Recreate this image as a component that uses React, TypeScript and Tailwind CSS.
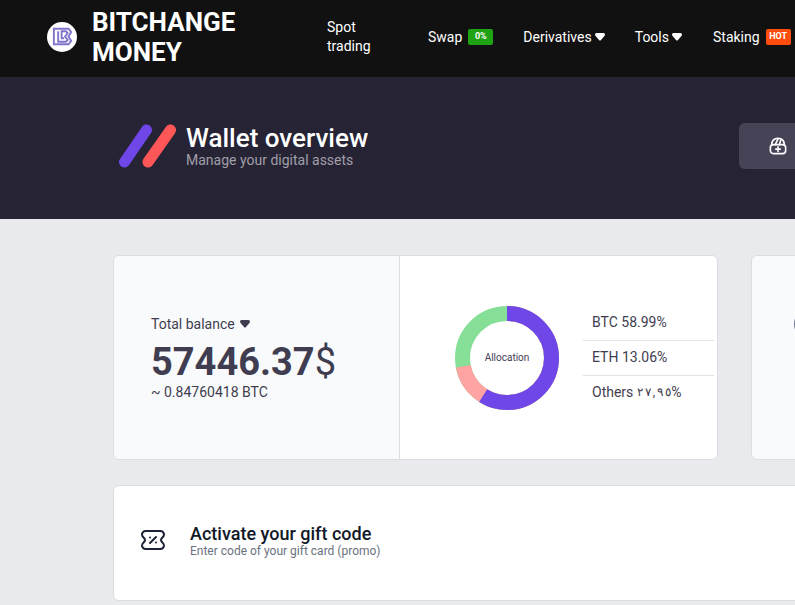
import React from "react";

function Caret({ className }: { className: string }) {
  return (
    <svg viewBox="0 0 10 8" className={className} fill="currentColor">
      <path d="M1.500 0h7Q10 0 10 1.500q0 1-1 2L6 7Q5 8 4 7L1 3.500Q0 2.500 0 1.500 0 0 1.500 0Z" />
    </svg>
  );
}

function Logo() {
  return (
    <div className="flex h-[30px] w-[30px] shrink-0 items-center justify-center rounded-full bg-white">
      <svg viewBox="0 0 24 22" className="h-[19px] w-[21px]" fill="none" stroke="#8075cc" strokeWidth="2.2">
        <path d="M2 2h17l3 4-3 5 3 5-3 4H2Z" />
        <path d="M7 5v12h9l2-2-3-4 3-4-2-2H11v8h3" />
      </svg>
    </div>
  );
}

function Donut() {
  return (
    <div className="relative h-[104px] w-[104px] shrink-0">
      <svg viewBox="0 0 104 104" className="h-full w-full -rotate-90">
        <circle cx="52" cy="52" r="44.5" fill="none" stroke="#86df96" strokeWidth="15" />
        <circle cx="52" cy="52" r="44.5" fill="none" stroke="#ffa3a3" strokeWidth="15" pathLength="100" strokeDasharray="72 28" />
        <circle cx="52" cy="52" r="44.5" fill="none" stroke="#6f46e8" strokeWidth="15" pathLength="100" strokeDasharray="59 41" />
      </svg>
      <div className="absolute inset-0 flex items-center justify-center pt-[2px] text-[10px] text-[#3f3d56]">Allocation</div>
    </div>
  );
}

const navText = "text-sm text-white";

export default function App() {
  return (
    <div className="h-[605px] w-[795px] overflow-hidden bg-[#e9eaee] font-['Roboto',sans-serif]">
      <header className="flex h-[77px] items-center bg-[#111111] pb-[4px] pl-[47px]">
        <Logo />
        <div className="ml-[15px] w-[190px] text-[26px] leading-[30px] font-bold text-white">BITCHANGE MONEY</div>
        <div className={`ml-[45px] w-[60px] leading-[19px] ${navText}`}>Spot trading</div>
        <div className={`ml-[41px] flex items-center ${navText}`}>
          Swap
          <span className="ml-[6px] flex h-[16px] w-[25px] items-center justify-center rounded-[2px] bg-[#1fa114] text-[9px] font-bold">0%</span>
        </div>
        <div className={`ml-[30px] flex items-center ${navText}`}>
          Derivatives
          <Caret className="ml-[3px] h-[8px] w-[10px]" />
        </div>
        <div className={`ml-[30px] flex items-center ${navText}`}>
          Tools
          <Caret className="ml-[3px] h-[8px] w-[10px]" />
        </div>
        <div className={`ml-[31px] flex items-center ${navText}`}>
          Staking
          <span className="ml-[6px] flex h-[16px] w-[25px] items-center justify-center rounded-[2px] bg-[#ff4d0d] text-[9px] font-bold">HOT</span>
        </div>
      </header>

      <section className="flex h-[142px] items-center bg-[#262335] pb-[4px] pl-[119px]">
        <svg viewBox="0 0 58 44" className="h-[44px] w-[58px] shrink-0">
          <line x1="5.500" y1="38" x2="27.500" y2="6" stroke="#6f46e8" strokeWidth="11" strokeLinecap="round" />
          <line x1="29" y1="38" x2="51.500" y2="6" stroke="#ff5757" strokeWidth="11" strokeLinecap="round" />
        </svg>
        <div className="ml-[9px] w-[553px] shrink-0 pb-[2px]">
          <h1 className="text-[26px] leading-[30px] font-medium text-white">Wallet overview</h1>
          <p className="text-sm leading-[15px] text-[#a09fa8]">Manage your digital assets</p>
        </div>
        <div className="flex h-[46px] w-[120px] shrink-0 items-center rounded-md bg-[#464356] pl-[30px]">
          <svg viewBox="0 0 20 20" className="h-[18px] w-[18px] text-white" fill="none" stroke="currentColor" strokeWidth="1.800" strokeLinecap="round" strokeLinejoin="round">
            <path d="M3 9C3 4 6 1.500 10 1.500S17 4 17 9" />
            <path d="M10 2 7 8.500M13 3.500l-1.500 5" />
            <rect x="1.500" y="8.500" width="17" height="10" rx="3.500" />
            <path d="M10 11v5M7.500 13.500h5" />
          </svg>
        </div>
      </section>

      <main className="flex flex-col gap-[25px] pt-[36px] pl-[113px]">
        <div className="flex gap-[33px]">
          <div className="flex h-[205px] w-[605px] shrink-0 overflow-hidden rounded-md border border-[#dcdde1] bg-white">
            <div className="flex w-[286px] shrink-0 flex-col justify-center border-r border-[#dcdde1] bg-[#f9fafc] pt-[1px] pl-[37px] text-[#3f3d4f]">
              <div className="flex items-center text-sm leading-[20px]">
                Total balance
                <Caret className="ml-[5px] h-[8px] w-[10px]" />
              </div>
              <div className="mt-[5px] text-[38px] leading-[46px] font-bold">
                57446.37<span className="font-normal">$</span>
              </div>
              <div className="mt-[-3px] text-sm leading-[20px]">~ 0.84760418 BTC</div>
            </div>
            <div className="flex flex-1 items-center pl-[55px] text-sm text-[#3f3d4f]">
              <Donut />
              <ul className="ml-[24px] w-[131px] pt-[1px]">
                <li className="flex h-[35px] items-center border-b border-[#e2e3e6] pb-[2px] pl-[9px]">BTC 58.99%</li>
                <li className="flex h-[35px] items-center border-b border-[#e2e3e6] pb-[2px] pl-[9px]">ETH 13.06%</li>
                <li className="flex h-[35px] items-center pb-[2px] pl-[9px] whitespace-pre">
                  Others{" "}
                  <span className="flex gap-[2px] text-xs">
                    <span>٢</span>
                    <span>٧</span>
                    <span>,</span>
                    <span>٩</span>
                    <span>٥</span>
                  </span>
                  %
                </li>
              </ul>
            </div>
          </div>
          <div className="h-[205px] w-[400px] shrink-0 rounded-md border border-[#dcdde1] bg-[#f9fafc] pt-[53px] pl-[42px]">
            <div className="h-[30px] w-[30px] rounded-full border-[3px] border-[#67718c]" />
          </div>
        </div>

        <div className="flex h-[116px] w-[900px] shrink-0 items-center rounded-md border border-[#dcdde1] bg-white pb-[6px] pl-[26px]">
          <svg viewBox="0 0 26 20" className="h-[20px] w-[26px] shrink-0 text-[#1c2333]" fill="none" stroke="currentColor" strokeWidth="2" strokeLinecap="round" strokeLinejoin="round">
            <path d="M6 1h14a4 4 0 0 1 4 3c.3 1.500-.5 2.500-2 4 0 0-1 1-1 2s1 2 1 2c1.500 1.500 2.300 2.500 2 4a4 4 0 0 1-4 3H6a4 4 0 0 1-4-3c-.3-1.500.5-2.500 2-4 0 0 1-1 1-2s-1-2-1-2C2.500 6.500 1.700 5.500 2 4a4 4 0 0 1 4-3Z" />
            <path d="m10 13 6-6" />
            <path d="M10 7.500h.01M16 12.500h.01" />
          </svg>
          <div className="ml-[24px]">
            <h2 className="text-lg leading-[22px] font-medium text-[#111827]">Activate your gift code</h2>
            <p className="text-xs leading-[13px] text-[#6b7280]">Enter code of your gift card (promo)</p>
          </div>
        </div>
      </main>
    </div>
  );
}
